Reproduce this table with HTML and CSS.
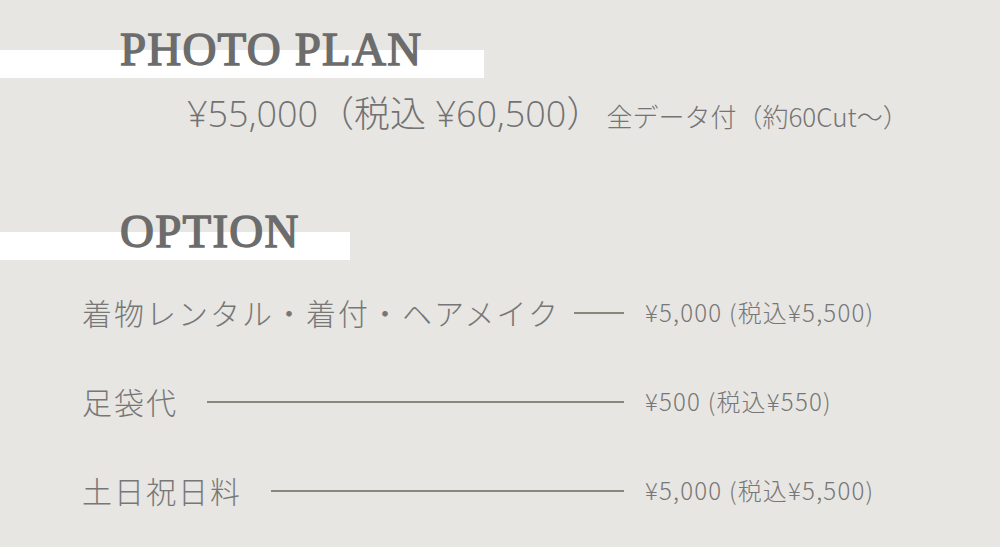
FILE: index.html
```html
<!DOCTYPE html>
<html lang="ja">
<head>
<meta charset="utf-8">
<link rel="stylesheet" href="styles.css">
</head>
<body>
<main class="page">
  <section class="plan">
    <h2 class="heading heading--plan">PHOTO PLAN</h2>
    <p class="plan-price"><span class="big">¥55,000（税込 ¥60,500）</span><span class="note">全データ付（約60Cut〜）</span></p>
  </section>
  <section class="option">
    <h2 class="heading heading--option">OPTION</h2>
    <ul class="rows">
      <li class="row">
        <div class="lead"><span class="label">着物レンタル・着付・ヘアメイク</span><span class="rule rule--short"></span></div>
        <span class="price">¥5,000 (税込¥5,500)</span>
      </li>
      <li class="row">
        <div class="lead"><span class="label">足袋代</span><span class="rule"></span></div>
        <span class="price">¥500 (税込¥550)</span>
      </li>
      <li class="row">
        <div class="lead"><span class="label">土日祝日料</span><span class="rule"></span></div>
        <span class="price">¥5,000 (税込¥5,500)</span>
      </li>
    </ul>
  </section>
</main>
</body>
</html>
```
FILE: styles.css
```css
html, body {
  margin: 0;
  padding: 0;
}
body {
  width: 1000px;
  height: 547px;
  overflow: hidden;
  background: #e7e6e2;
  font-family: "Noto Sans CJK JP", sans-serif;
  color: #767676;
}
.page {
  padding-top: 26px;
}
.heading {
  margin: 0;
  box-sizing: border-box;
  height: 52px;
  padding-left: 120px;
  font-family: "Liberation Serif", serif;
  font-weight: normal;
  font-size: 47px;
  line-height: 47px;
  letter-spacing: 1.2px;
  color: #6c6c6c;
  -webkit-text-stroke: 1.4px #6c6c6c;
  background: linear-gradient(to bottom, transparent 24px, #ffffff 24px);
}
.heading--plan {
  width: 484px;
}
.heading--option {
  width: 350px;
}
.plan {
  height: 182px;
}
.plan-price {
  margin: 14px 0 0 187px;
  display: flex;
  align-items: baseline;
  white-space: nowrap;
}
.big {
  font-family: "Open Sans", "Noto Sans CJK JP", sans-serif;
  font-stretch: 90%;
  font-weight: 300;
  font-size: 36px;
  line-height: 44px;
  color: #727272;
}
.note {
  margin-left: 4px;
  font-family: "Noto Sans CJK JP", sans-serif;
  font-weight: 300;
  font-size: 26px;
  color: #747474;
}
.rows {
  list-style: none;
  margin: 7px 0 0;
  padding: 0 0 0 82px;
}
.row {
  display: flex;
  align-items: center;
  height: 89px;
}
.lead {
  display: flex;
  align-items: center;
  width: 563px;
  box-sizing: border-box;
  padding-right: 21px;
}
.label {
  font-weight: 300;
  font-size: 30px;
  letter-spacing: 2px;
  color: #777777;
  white-space: nowrap;
}
.rule {
  flex: 1;
  height: 2px;
  margin-left: 29px;
  margin-top: 2px;
  background: #87877c;
}
.rule--short {
  margin-left: 14px;
}
.price {
  font-weight: 300;
  font-size: 24px;
  letter-spacing: 1.2px;
  color: #777777;
  white-space: nowrap;
}
```
